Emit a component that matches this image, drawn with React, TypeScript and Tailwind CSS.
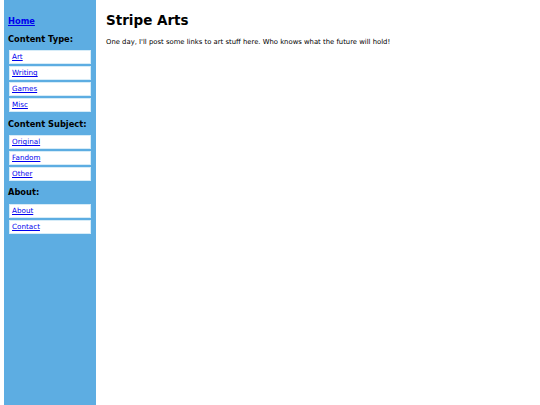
import React from "react";

const Box = ({ label }: { label: string }) => (
  <div className="bg-white border border-[#d6ecf8] h-[14px] flex items-center pl-[2px] mb-[2px]">
    <a href="#" className="text-[#0000ee] underline text-[7.2px] leading-none">{label}</a>
  </div>
);

const Heading = ({ children, mt }: { children: React.ReactNode; mt: string }) => (
  <div className={`font-bold text-[8.3px] leading-[10px] h-[10px] whitespace-nowrap text-black ${mt}`}>{children}</div>
);

export default function App() {
  return (
    <div className="flex w-[540px] h-[405px] bg-white" style={{ fontFamily: '"DejaVu Sans", Verdana, sans-serif' }}>
      <div className="ml-[4px] w-[92px] h-[405px] bg-[#5dade2] flex flex-col px-[4px]">
        <a href="#" className="mt-[16px] h-[10px] font-bold text-[8.3px] leading-[10px] text-[#0000ee] underline">Home</a>
        <Heading mt="mt-[8px]">Content Type:</Heading>
        <div className="mt-[6px] px-[1px]">
          <Box label="Art" />
          <Box label="Writing" />
          <Box label="Games" />
          <Box label="Misc" />
        </div>
        <Heading mt="mt-[5px]">Content Subject:</Heading>
        <div className="mt-[6px] px-[1px]">
          <Box label="Original" />
          <Box label="Fandom" />
          <Box label="Other" />
        </div>
        <Heading mt="mt-[4px]">About:</Heading>
        <div className="mt-[7px] px-[1px]">
          <Box label="About" />
          <Box label="Contact" />
        </div>
      </div>
      <div className="pl-[10px] pt-[12px]">
        <h1 className="font-bold text-[13.5px] leading-[16px] text-black">Stripe Arts</h1>
        <p className="mt-[10px] text-[6.85px] leading-[8px] text-black">One day, I'll post some links to art stuff here. Who knows what the future will hold!</p>
      </div>
    </div>
  );
}
